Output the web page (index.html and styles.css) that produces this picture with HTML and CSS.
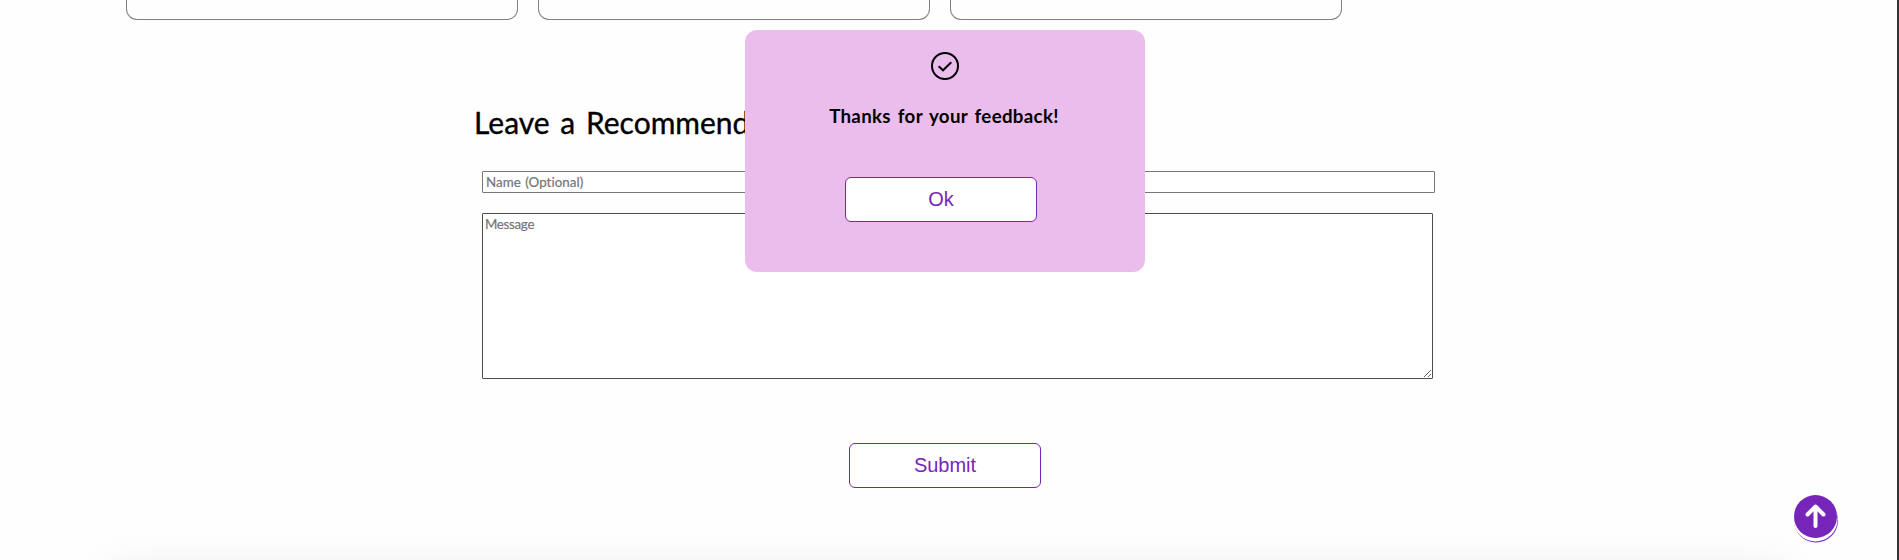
FILE: index.html
```html
<!DOCTYPE html>
<html lang="en">
<head>
<meta charset="utf-8">
<title>Recommendations</title>
<link rel="stylesheet" href="styles.css">
</head>
<body>
<main class="page">
  <section class="cards">
    <div class="card"></div>
    <div class="card"></div>
    <div class="card"></div>
  </section>
  <form class="form">
    <h1 class="form-title"><span class="title-text">Leave a Recommendation</span></h1>
    <input class="field name" type="text" placeholder="Name (Optional)">
    <textarea class="field message" placeholder="Message"></textarea>
    <button class="btn submit" type="button">Submit</button>
  </form>
  <footer class="footer"></footer>
</main>
<div class="popup">
  <svg class="check" viewBox="0 0 28 28" fill="none" stroke="#000" stroke-width="2"><circle cx="14" cy="14" r="13"/><path d="M7.6 14.2l4.4 4.1 8.3-8.1"/></svg>
  <h3 class="popup-title"><span class="popup-text">Thanks for your feedback!</span></h3>
  <button class="btn" type="button">Ok</button>
</div>
<a class="to-top" href="#"><svg viewBox="0 0 43 43" fill="none" stroke="#fff" stroke-width="4" stroke-linecap="round" stroke-linejoin="round"><path d="M21.5 31V12M13.5 19.5l8-8 8 8"/></svg></a>
</body>
</html>
```
FILE: styles.css
```css
* { box-sizing: border-box; }
body {
  margin: 0;
  height: 560px;
  overflow: hidden;
  background: #fefefe;
  font-family: "Trebuchet MS", Lato, sans-serif;
  font-variant-ligatures: none;
  color: #000;
}
.page {
  height: 560px;
  border-right: 2px solid #333;
  overflow: hidden;
}
.cards {
  display: flex;
  gap: 20px;
  height: 20px;
  padding-left: 126px;
}
.card {
  width: 392px;
  border: 1px solid #808080;
  border-top: 0;
  border-radius: 0 0 11px 11px;
}
.form {
  display: flex;
  flex-direction: column;
  align-items: flex-start;
  width: 961px;
  height: 540px;
  margin-left: 474px;
}
.form-title {
  margin: 82px 0 1px;
  font-size: 30px;
  font-weight: 400;
  line-height: 40px;
  word-spacing: 3px;
  -webkit-text-stroke: .35px #000;
  white-space: nowrap;
}
.field {
  margin-left: 8px;
  font-family: inherit;
  font-size: 13.33px;
  background: #fff;
}
.field::placeholder {
  color: #757575;
  -webkit-text-stroke: .2px #757575;
}
.name {
  width: 953px;
  height: 22px;
  margin-top: 28px;
  padding: 1px 3px;
  border: 1px solid #767676;
  border-radius: 1px;
  word-spacing: 1px;
  letter-spacing: .05px;
}
.message {
  width: 951px;
  height: 166px;
  margin-top: 20px;
  padding: 2px;
  border: 1px solid #4c4c4c;
  border-radius: 1px;
  line-height: 16px;
  letter-spacing: -.3px;
}
.btn {
  width: 192px;
  height: 45px;
  padding: 0;
  border: 1px solid #7724b9;
  border-radius: 6px;
  background: #fff;
  color: #7724b9;
  font: 20px "Liberation Sans", Arial, sans-serif;
}
.submit { margin: 64px 0 0 375px; }
.footer {
  height: 100px;
  margin: 18px 110px 0;
  box-shadow: 0 0 50px rgba(0, 0, 0, .12);
}
.popup {
  position: absolute;
  left: 745px;
  top: 30px;
  width: 400px;
  height: 242px;
  padding: 22px 8px 0 0;
  border-radius: 12px;
  background: #ebbdec;
  display: flex;
  flex-direction: column;
  align-items: center;
}
.check { width: 28px; height: 28px; margin-left: 8px; }
.popup-title {
  margin: 20px 0 44px 6px;
  font-size: 18.7px;
  font-weight: 700;
  line-height: 33px;
  word-spacing: 2px;
  letter-spacing: .33px;
  white-space: nowrap;
}
.to-top {
  position: absolute;
  left: 1794px;
  top: 495px;
  width: 43px;
  height: 43px;
  border-radius: 50%;
  background: #7724b9;
  box-shadow: 0 3px 0 .5px #fff, .5px 4px 0 .5px #7724b9;
}
.to-top svg { display: block; }
```
